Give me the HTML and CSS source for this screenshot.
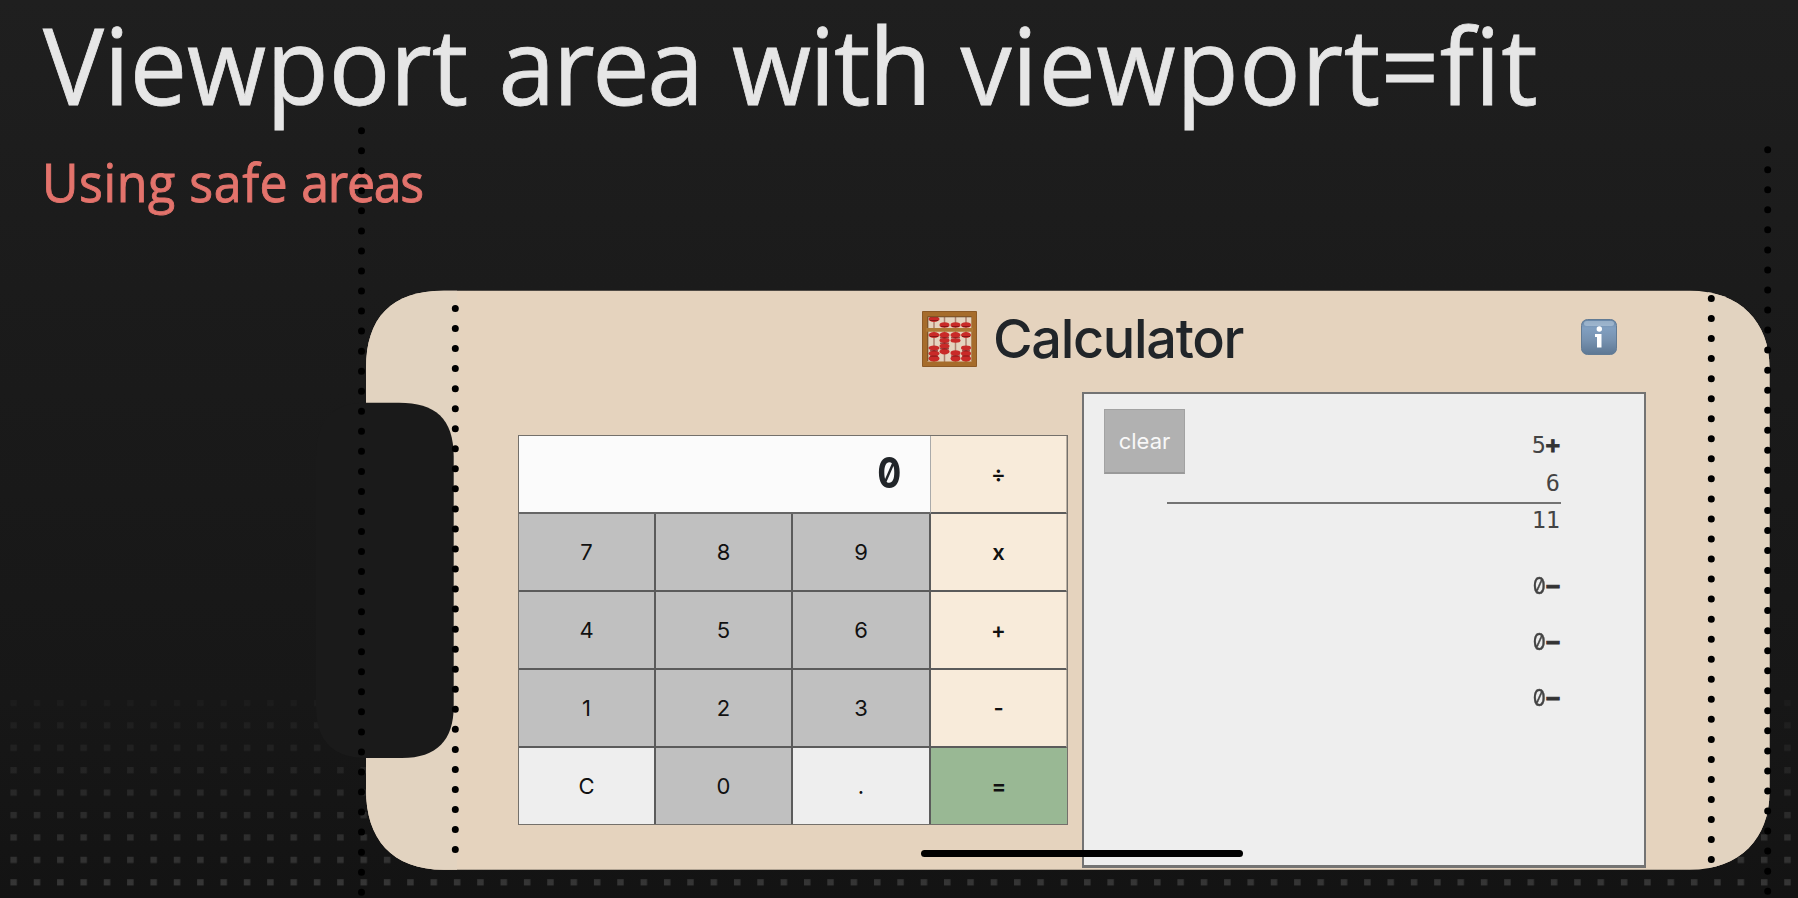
FILE: index.html
```
<!DOCTYPE html>
<html lang="en">
<head>
<meta charset="utf-8">
<title>Viewport area with viewport=fit</title>
<link rel="stylesheet" href="styles.css">
</head>
<body>
<main class="slide">
  <svg class="backdrop" viewBox="0 0 1798 898" aria-hidden="true">
    <defs>
      <linearGradient id="fade" x1="0" y1="690" x2="0" y2="898" gradientUnits="userSpaceOnUse">
        <stop offset="0" stop-color="#fff" stop-opacity=".018"/>
        <stop offset=".3" stop-color="#fff" stop-opacity=".055"/>
        <stop offset="1" stop-color="#fff" stop-opacity=".155"/>
      </linearGradient>
      <pattern id="grid" x="10.4" y="699.8" width="23.34" height="22.42" patternUnits="userSpaceOnUse">
        <rect width="6.5" height="6.3" fill="#fff"/>
      </pattern>
      <mask id="dots" maskUnits="userSpaceOnUse" x="0" y="699" width="1798" height="199"><rect y="699" width="1798" height="199" fill="url(#grid)"/></mask>
    </defs>
    <rect y="699" width="1798" height="199" fill="url(#fade)" mask="url(#dots)"/>
  </svg>
  <h1 class="title">Viewport <span class="tight">area</span> <span class="snug">with</span> <span class="loose">viewport=fit</span></h1>
  <p class="subtitle"><span class="loose">Using safe</span> <span class="snug">areas</span></p>
  <section class="phone">
    <svg class="shell" viewBox="316 290 1456 582" aria-hidden="true">
      <defs>
        <clipPath id="body"><path d="M366 368C366 318 391 290.7 444 290.7H1690C1740 290.7 1769.5 322 1769.5 368V792C1769.5 838 1740 869.8 1690 869.8H444C391 869.8 366 838 366 790Z"/></clipPath>
      </defs>
      <g clip-path="url(#body)">
        <rect x="366" y="290" width="1404" height="580" fill="#e5d3be"/>
        <rect x="366" y="290" width="91" height="580" fill="#e2d3c0"/>
        <rect x="1708" y="290" width="62" height="580" fill="#e2d3c0"/>
      </g>
      <path d="M366 402.7H399C435 402.7 453.7 418 453.7 457V706C453.7 740 437 758 402 758H366C332 758 316 740 316 706V457C316 420 332 402.7 366 402.7Z" fill="#1a1a1a"/>
    </svg>
    <header class="bar">
      <svg class="abacus" viewBox="0 0 55 56" aria-hidden="true">
        <path d="M12 4V52M22.5 4V52M33.5 4V52M44 4V52" stroke="#ad806f" stroke-width="1.5"/>
        <g fill="#c92a28">
          <ellipse cx="12" cy="8" rx="5.5" ry="3"/><ellipse cx="22.5" cy="14" rx="5" ry="2.8"/><ellipse cx="33.5" cy="14" rx="5" ry="2.8"/><ellipse cx="44" cy="14" rx="5" ry="2.8"/>
          <ellipse cx="12" cy="24" rx="5.5" ry="3"/><ellipse cx="22.5" cy="24" rx="5" ry="3"/><ellipse cx="33.5" cy="24" rx="5" ry="3"/><ellipse cx="44" cy="24" rx="5" ry="3"/>
          <ellipse cx="22.5" cy="29.5" rx="5" ry="2.4"/><ellipse cx="33.5" cy="29.5" rx="5" ry="2.2"/><ellipse cx="22.5" cy="35" rx="5" ry="2.6"/><ellipse cx="22.5" cy="40.5" rx="5" ry="3"/>
          <ellipse cx="12" cy="37" rx="5.5" ry="2.4"/><ellipse cx="12" cy="42.5" rx="5.5" ry="2.8"/><ellipse cx="12" cy="47.5" rx="5.5" ry="3.2"/>
          <ellipse cx="33.5" cy="42" rx="5" ry="2.8"/><ellipse cx="33.5" cy="47.5" rx="5" ry="3.2"/>
          <ellipse cx="44" cy="37" rx="5" ry="2.4"/><ellipse cx="44" cy="42.5" rx="5" ry="2.8"/><ellipse cx="44" cy="47.5" rx="5" ry="3.2"/>
        </g>
        <path d="M8 9.5h8M19 15.5h7M30 15.5h7M40.500 15.5h7M8 25.5h8M18 26.8h9M29 26.8h9M40 25.5h8M18 32.2h9M18 37.8h9M8 39.8h8M8 45.1h8M29 45h9M40 45h8M40 39.8h8" stroke="#841717" stroke-width="1"/>
        <path d="M5.500 50V5.500H50.500V50" fill="none" stroke="#5f4025" stroke-width="1.6"/>
        <path d="M3 3H52V53H3Z" fill="none" stroke="#a66c2b" stroke-width="5"/>
        <path d="M4 18.8H51" stroke="#ad7936" stroke-width="3.8"/>
        <path d="M.5.5H54.5V55.5H.5Z" fill="none" stroke="#8d5a26"/>
      </svg>
      <h2 class="name">Calculator</h2>
      <svg class="info" viewBox="0 0 36 36" aria-hidden="true">
        <defs><linearGradient id="blue" x2="0" y2="1"><stop stop-color="#6685a6"/><stop offset=".25" stop-color="#819fc0"/><stop offset=".6" stop-color="#7691af"/><stop offset="1" stop-color="#5d7793"/></linearGradient></defs>
        <rect x=".5" y=".5" width="35" height="35" rx="6" fill="url(#blue)" stroke="#627b94"/>
        <rect x="3" y="2" width="30" height="5" rx="2.5" fill="#c2d3e4" opacity=".5"/>
        <circle cx="18.3" cy="10" r="2.7" fill="#fff"/>
        <path d="M14 15H20.5V28.5H16V18H14Z" fill="#fff"/>
      </svg>
    </header>
    <div class="panels">
      <div class="pad">
        <output class="display"><span class="zero">0</span></output><button class="key op">÷</button>
        <button class="key">7</button><button class="key">8</button><button class="key">9</button><button class="key op">x</button>
        <button class="key">4</button><button class="key">5</button><button class="key">6</button><button class="key op">+</button>
        <button class="key">1</button><button class="key">2</button><button class="key">3</button><button class="key op">-</button>
        <button class="key light">C</button><button class="key">0</button><button class="key light">.</button><button class="key equal">=</button>
      </div>
      <div class="paper">
        <button class="clear">clear</button>
        <div class="tape">
          <p class="entry">5<b>+</b></p>
          <p class="entry">6</p>
          <p class="entry total">11</p>
          <p class="entry gap"><span class="zero">0</span><b>−</b></p>
          <p class="entry gap"><span class="zero">0</span><b>−</b></p>
          <p class="entry gap"><span class="zero">0</span><b>−</b></p>
        </div>
      </div>
    </div>
    <div class="home"></div>
  </section>
  <svg class="guides" viewBox="0 0 1798 898" aria-hidden="true">
    <path d="M361.5 130.7V893M455.3 308.5V850M1711.3 298.5V860M1767.7 149.7V892"/>
  </svg>
</main>
</body>
</html>
```
FILE: styles.css
```
* { box-sizing: border-box; }
body { margin: 0; }
h1, h2, p { margin: 0; font-weight: 400; }
button { font: inherit; padding: 0; border: 0; border-radius: 0; color: #111; }

.slide {
  position: relative;
  width: 1798px;
  height: 898px;
  overflow: hidden;
  background: linear-gradient(#1f1f1f, #1b1b1b 32%, #171717 78%, #131313);
  font-family: "Open Sans", "Noto Sans", sans-serif;
}
.backdrop, .guides { position: absolute; inset: 0; width: 100%; height: 100%; }
.guides { pointer-events: none; }
.guides path { fill: none; stroke: #000; stroke-width: 7; stroke-linecap: round; stroke-dasharray: 0 20.04; }

.title {
  height: 144px;
  margin-left: 43px;
  font-size: 105.5px;
  line-height: 128px;
  word-spacing: 4px;
  white-space: nowrap;
  color: #e6e6e6;
  -webkit-text-stroke: .8px #e6e6e6;
  transform: scaleX(.968);
  transform-origin: 0 0;
}
.title .tight { letter-spacing: -2.5px; }
.title .snug { letter-spacing: -1.5px; }
.title .loose { letter-spacing: .65px; }
.subtitle {
  height: 146px;
  margin-left: 42px;
  font-size: 53px;
  line-height: 75px;
  white-space: nowrap;
  color: #e3736c;
  -webkit-text-stroke: .9px #e3736c;
  transform: scaleX(.945);
  transform-origin: 0 0;
}
.subtitle .loose { letter-spacing: .6px; }
.subtitle .snug { letter-spacing: -1.4px; }

.phone {
  position: relative;
  width: 1404px;
  height: 580px;
  margin-left: 366px;
  font-family: Inter, "Liberation Sans", sans-serif;
}
.shell { position: absolute; left: -50px; top: 0; width: 1456px; height: 582px; }
.bar { position: relative; display: flex; height: 102px; padding-left: 556px; }
.abacus { width: 55px; height: 56px; margin-top: 21px; }
.name { width: 604px; padding-left: 16px; font-size: 54px; font-weight: 500; line-height: 98px; letter-spacing: -1.3px; color: #212529; }
.info { width: 36px; height: 36px; margin-top: 29px; }

.panels { position: relative; display: flex; align-items: flex-start; gap: 14px; padding-left: 152px; }
.pad {
  display: grid;
  grid-template-columns: 137px 137px 138px 136px;
  grid-template-rows: 78px 78px 78px 78px 76px;
  width: 550px;
  margin-top: 43px;
  border: 1px solid #74706b;
}
.display {
  grid-column: span 3;
  padding-right: 29px;
  background: #fbfbfb;
  border-right: 1px solid #aaa;
  border-bottom: 2px solid #666;
  font: 700 42px/73px Inter, sans-serif;
  text-align: right;
  color: #212529;
}
.zero { display: inline-block; font-family: Inter, sans-serif; font-feature-settings: "zero"; transform: scaleX(.85); transform-origin: 100% 0; }
.tape .zero { -webkit-text-stroke: .4px #444; transform: scaleX(.88); }
.key {
  background: #c0c0c0;
  border-right: 2px solid #5b5b5b;
  border-bottom: 2px solid #5b5b5b;
  font-size: 22px;
  line-height: 1;
}
.key.light { background: #eee; }
.key.op { background: #f8ebda; border-right: 1px solid #b8aea2; font-weight: 600; }
.key.equal { background: #99b894; border-right: 0; font-weight: 600; }
.pad > :nth-last-child(-n+4) { border-bottom: 0; }

.paper {
  width: 564px;
  height: 476px;
  display: flex;
  align-items: flex-start;
  padding: 15px 83px 0 20px;
  background: #eee;
  border: 2px solid #737373;
  border-bottom-width: 3px;
}
.clear {
  width: 81px;
  height: 65px;
  flex: none;
  background: #b1b1b1;
  border: 1px solid #a2a2a2;
  border-bottom: 2px solid #999;
  color: #f8f8f8;
  font-size: 22px;
}
.tape {
  width: 395px;
  margin: 17px 0 0 -18px;
  font: 23.5px/38px "DejaVu Sans Mono", monospace;
  text-align: right;
  color: #444;
}
.tape b { -webkit-text-stroke: .8px #333; color: #333; }
.entry { height: 38px; padding-right: 1px; }
.total { border-top: 2px solid #737373; line-height: 32px; height: 37px; }
.gap { height: 38px; margin-top: 18px; }
.gap:nth-child(4) { margin-top: 28px; }
.home { position: absolute; left: 555px; top: 560px; width: 322px; height: 7px; border-radius: 4px; background: #000; }
```
